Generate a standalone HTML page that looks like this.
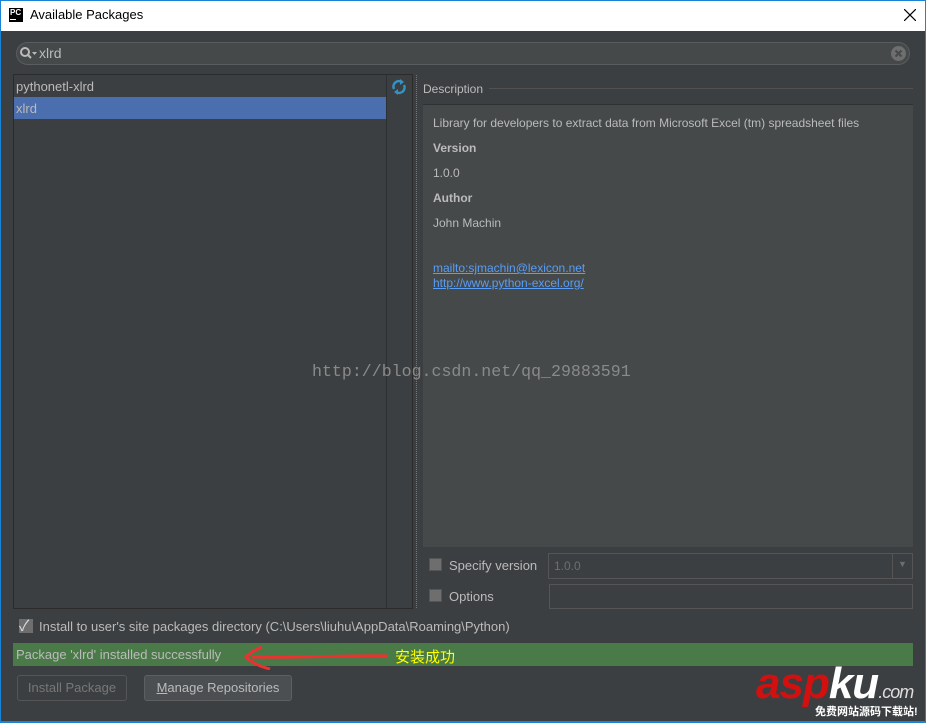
<!DOCTYPE html>
<html><head><meta charset="utf-8"><style>
*{margin:0;padding:0;box-sizing:border-box}
body{width:926px;height:723px;overflow:hidden;background:#3c3f41;font-family:"Liberation Sans","Noto Sans CJK SC",sans-serif;font-size:13px;color:#bbbbbb;position:relative}
.a{position:absolute}
</style></head><body>
<div class="a" style="left:0;top:0;width:926px;height:31px;background:#fff;border:1px solid #1883d7;border-bottom:none"></div>
<div class="a" style="left:9px;top:8px;width:14px;height:14px;background:#000;color:#fff;font-size:8px;font-weight:bold;line-height:9px;padding-left:1px">PC<div style="width:6px;height:1px;background:#fff;margin-top:2px"></div></div>
<div class="a" style="left:30px;top:7px;color:#000;font-size:13px">Available Packages</div>
<svg class="a" style="left:904px;top:9px" width="12" height="12"><path d="M0 0L12 12M12 0L0 12" stroke="#000" stroke-width="1.2"/></svg>
<div class="a" style="left:0;top:31px;width:1px;height:692px;background:#1883d7"></div>
<div class="a" style="left:925px;top:31px;width:1px;height:692px;background:#1883d7"></div>
<div class="a" style="left:0;top:721px;width:926px;height:2px;background:#1883d7"></div>
<!-- search -->
<div class="a" style="left:16px;top:42px;width:894px;height:23px;border:1px solid #5a5d5f;border-radius:12px;background:#45494a"></div>
<svg class="a" style="left:19px;top:46px" width="20" height="16"><circle cx="6" cy="6" r="4" stroke="#bbb" stroke-width="2" fill="none"/><line x1="9" y1="9" x2="12" y2="12" stroke="#bbb" stroke-width="2"/><path d="M13 6h5l-2.5 3z" fill="#bbb"/></svg>
<div class="a" style="left:39px;top:45px;font-size:14px;color:#bbb">xlrd</div>
<svg class="a" style="left:891px;top:46px" width="15" height="15"><circle cx="7.5" cy="7.5" r="7.5" fill="#6e6e6e"/><path d="M4.5 4.5L10.5 10.5M10.5 4.5L4.5 10.5" stroke="#45494a" stroke-width="2"/></svg>
<!-- list -->
<div class="a" style="left:13px;top:74px;width:400px;height:535px;border:1px solid #2b2b2b;background:#3c3f41"></div>
<div class="a" style="left:386px;top:75px;width:1px;height:533px;background:#2e3133"></div>
<div class="a" style="left:16px;top:79px;font-size:13px">pythonetl-xlrd</div>
<div class="a" style="left:14px;top:97px;width:372px;height:22px;background:#4b6eaf"></div>
<div class="a" style="left:16px;top:101px;font-size:13px">xlrd</div>
<svg class="a" style="left:391px;top:79px" width="16" height="16"><path d="M3 10A5.5 5.5 0 0 1 11 3" stroke="#3592c4" stroke-width="2.5" fill="none"/><path d="M9 0L13 3L9 6z" fill="#3592c4"/><path d="M13 6A5.5 5.5 0 0 1 5 13" stroke="#3592c4" stroke-width="2.5" fill="none"/><path d="M7 10L3 13L7 16z" fill="#3592c4"/></svg>
<div class="a" style="left:416px;top:75px;width:2px;height:533px;border-left:1px dotted #777"></div>
<!-- description -->
<div class="a" style="left:423px;top:82px;font-size:12px">Description</div>
<div class="a" style="left:489px;top:88px;width:424px;height:1px;background:#515151"></div>
<div class="a" style="left:423px;top:104px;width:490px;height:443px;background:#45494a;border-top:1px solid #2e3133"></div>
<div class="a" style="left:433px;top:116px;font-size:12px;color:#bbb">Library for developers to extract data from Microsoft Excel (tm) spreadsheet files</div>
<div class="a" style="left:433px;top:141px;font-size:12px;font-weight:bold">Version</div>
<div class="a" style="left:433px;top:166px;font-size:12px">1.0.0</div>
<div class="a" style="left:433px;top:191px;font-size:12px;font-weight:bold">Author</div>
<div class="a" style="left:433px;top:216px;font-size:12px">John Machin</div>
<div class="a" style="left:433px;top:261px;font-size:12px;color:#589df6;text-decoration:underline">mailto:sjmachin@lexicon.net</div>
<div class="a" style="left:433px;top:276px;font-size:12px;color:#589df6;text-decoration:underline">http://www.python-excel.org/</div>
<div class="a" style="left:312px;top:362px;font-family:'Liberation Mono',monospace;font-size:16.6px;color:#8a8a8a">http://blog.csdn.net/qq_29883591</div>
<!-- options -->
<div class="a" style="left:429px;top:558px;width:13px;height:13px;background:#6e6e6e;border:1px solid #555"></div>
<div class="a" style="left:449px;top:558px">Specify version</div>
<div class="a" style="left:548px;top:553px;width:365px;height:26px;border:1px solid #555;background:#3c3f41"></div>
<div class="a" style="left:892px;top:553px;width:1px;height:26px;background:#555"></div>
<div class="a" style="left:554px;top:559px;color:#6e6e6e;font-size:12px">1.0.0</div>
<div class="a" style="left:898px;top:559px;color:#6e6e6e;font-size:9px">▼</div>
<div class="a" style="left:429px;top:589px;width:13px;height:13px;background:#6e6e6e;border:1px solid #555"></div>
<div class="a" style="left:449px;top:589px">Options</div>
<div class="a" style="left:549px;top:584px;width:364px;height:25px;border:1px solid #555"></div>
<!-- checkbox -->
<div class="a" style="left:19px;top:619px;width:14px;height:14px;background:#6e6e6e"></div>
<div class="a" style="left:19px;top:615px;color:#ddd;font-size:15px">✓</div>
<div class="a" style="left:39px;top:619px">Install to user's site packages directory (C:\Users\liuhu\AppData\Roaming\Python)</div>
<!-- status -->
<div class="a" style="left:13px;top:643px;width:900px;height:23px;background:#4a7a48"></div>
<div class="a" style="left:16px;top:647px;color:#bbb">Package 'xlrd' installed successfully</div>
<svg class="a" style="left:240px;top:645px" width="150" height="25"><path d="M148 11 C110 10 60 13 12 12 M22 2 C12 6 8 10 6 12 C10 16 18 21 30 24" stroke="#f03030" stroke-width="3" fill="none"/></svg>
<div class="a" style="left:395px;top:646px;color:#ffff00;font-size:15px">安装成功</div>
<!-- buttons -->
<div class="a" style="left:17px;top:675px;width:110px;height:26px;border:1px solid #555;border-radius:3px;color:#777;text-align:center;line-height:24px">Install Package</div>
<div class="a" style="left:144px;top:675px;width:148px;height:26px;border:1px solid #5e6060;border-radius:3px;background:#4b4f51;color:#bbb;text-align:center;line-height:24px"><u>M</u>anage Repositories</div>
<!-- watermark -->
<div class="a" style="left:756px;top:662px;font-size:44px;font-weight:bold;font-style:italic;letter-spacing:-1px;line-height:44px"><span style="color:#d21010">asp</span><span style="color:#fff">ku</span><span style="color:#ddd;font-size:18px;font-weight:normal">.com</span></div>
<div class="a" style="left:815px;top:703px;color:#fff;font-size:11px;font-weight:bold">免费网站源码下载站!</div>
</body></html>
